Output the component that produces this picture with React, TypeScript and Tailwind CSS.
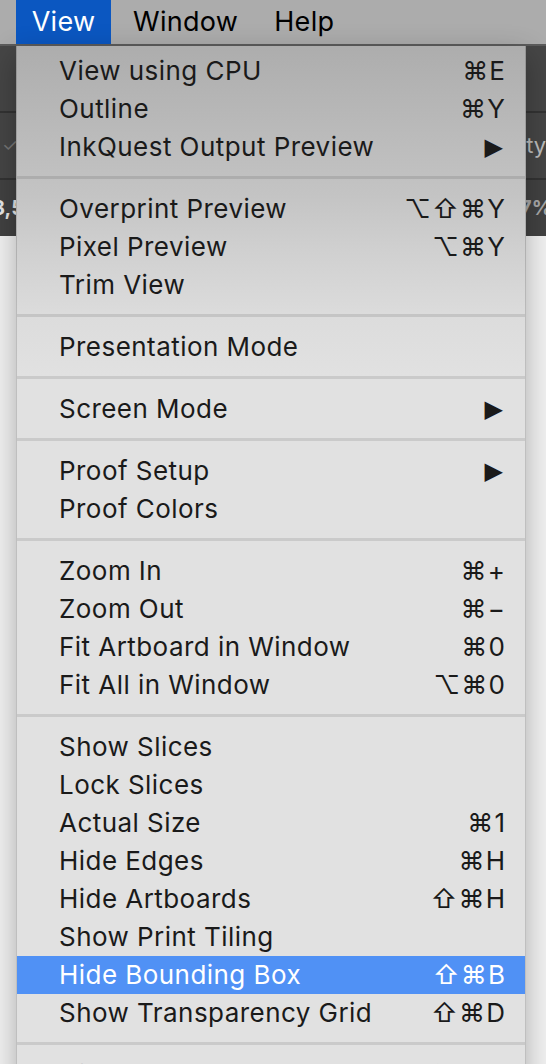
import React from 'react';

type Item = {
  label: string;
  shortcut?: string;
  submenu?: boolean;
  active?: boolean;
  disabled?: boolean;
};

const groups: Item[][] = [
  [
    { label: 'View using CPU', shortcut: '⌘E' },
    { label: 'Outline', shortcut: '⌘Y' },
    { label: 'InkQuest Output Preview', submenu: true },
  ],
  [
    { label: 'Overprint Preview', shortcut: '⌥⇧⌘Y' },
    { label: 'Pixel Preview', shortcut: '⌥⌘Y' },
    { label: 'Trim View' },
  ],
  [{ label: 'Presentation Mode' }],
  [{ label: 'Screen Mode', submenu: true }],
  [
    { label: 'Proof Setup', submenu: true },
    { label: 'Proof Colors' },
  ],
  [
    { label: 'Zoom In', shortcut: '⌘+' },
    { label: 'Zoom Out', shortcut: '⌘−' },
    { label: 'Fit Artboard in Window', shortcut: '⌘0' },
    { label: 'Fit All in Window', shortcut: '⌥⌘0' },
  ],
  [
    { label: 'Show Slices' },
    { label: 'Lock Slices' },
    { label: 'Actual Size', shortcut: '⌘1' },
    { label: 'Hide Edges', shortcut: '⌘H' },
    { label: 'Hide Artboards', shortcut: '⇧⌘H' },
    { label: 'Show Print Tiling' },
    { label: 'Hide Bounding Box', shortcut: '⇧⌘B', active: true },
    { label: 'Show Transparency Grid', shortcut: '⇧⌘D' },
  ],
  [{ label: 'Hide Template', shortcut: '⇧⌘W', disabled: true }],
];

const font = "font-['Inter','DejaVu_Sans',sans-serif]";

function MenuRow({ item }: { item: Item }) {
  const color = item.active
    ? 'bg-[#5091f5] text-white'
    : item.disabled
    ? 'text-[#a3a3a3]'
    : 'text-[#1a1a1a]';
  return (
    <div className={`h-[38px] flex items-center justify-between pl-[42px] pr-[20px] ${color}`}>
      <span className="text-[26px] tracking-[0.45px] leading-none whitespace-nowrap">{item.label}</span>
      {item.shortcut && (
        <span className="text-[26px] tracking-[1.2px] -mr-[1.2px] leading-none whitespace-nowrap">
          {item.shortcut}
        </span>
      )}
      {item.submenu && (
        <span className="text-[24px] leading-none mr-[2px] font-['DejaVu_Sans',sans-serif]">▶</span>
      )}
    </div>
  );
}

export default function App() {
  return (
    <div className={`relative w-[546px] h-[1064px] overflow-hidden bg-[#f3f3f3] ${font}`}>
      {/* menu bar */}
      <div className="h-[46px] bg-[#acacac] border-b-2 border-[#5c5c5c] flex items-stretch text-[27px] tracking-[0.3px] text-black">
        <div className="ml-[16px] w-[95px] bg-[#0b57c1] text-white flex items-center justify-center">View</div>
        <div className="ml-[22px] flex items-center">Window</div>
        <div className="ml-[36px] flex items-center">Help</div>
      </div>

      {/* app toolbar behind the menu */}
      <div className="flex flex-col bg-[#464646] text-[20px] font-bold">
        <div className="h-[67px] border-b-2 border-[#333]" />
        <div className="h-[67px] border-b-2 border-[#333] flex items-center justify-between">
          <span className="ml-[2px] text-[#777] text-[18px] font-normal">✓</span>
          <span className="-mr-[30px] text-[#bdbdbd] font-normal text-[22px]">Styles</span>
        </div>
        <div className="h-[56px] flex items-center justify-between bg-[#424242]">
          <span className="-ml-[8px] text-[#e8e8e8]">8,5</span>
          <span className="mr-[-6px] text-[#a9a9a9]">67%</span>
        </div>
      </div>

      {/* dropdown */}
      <div className="absolute top-[46px] left-[16px] w-[510px] pt-[6px] border-x border-black/15 shadow-[0_10px_28px_rgba(0,0,0,0.3)] bg-[linear-gradient(to_bottom,#adadad_0px,#c4c4c4_150px,#cfcfcf_200px,#dcdcdc_270px,#e1e1e1_330px)]">
        {groups.map((group, gi) => (
          <div key={gi}>
            {gi > 0 && (
              <div className="pt-[10px] pb-[11px]">
                <div className="h-[3px] bg-black/10" />
              </div>
            )}
            {group.map((item) => (
              <MenuRow key={item.label} item={item} />
            ))}
          </div>
        ))}
      </div>
    </div>
  );
}
